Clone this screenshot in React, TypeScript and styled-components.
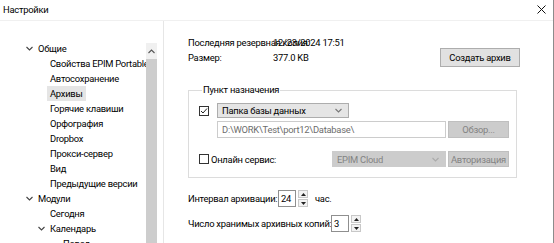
import React from 'react';
import styled, { createGlobalStyle, css } from 'styled-components';

const Global = createGlobalStyle`
  html, body { margin: 0; padding: 0; background: #fff; }
  body { font-family: Roboto, "Noto Sans", sans-serif; font-size: 9.4px; letter-spacing: -0.25px; color: #000; }
  * { box-sizing: border-box; }
`;

const Window = styled.div`
  width: 554px;
  height: 243px;
  overflow: hidden;
  display: flex;
  flex-direction: column;
  background: #fff;
  border-right: 1px solid #8c8c8c;
`;

const TitleBar = styled.div`
  height: 21px;
  flex: none;
  display: flex;
  align-items: center;
  justify-content: space-between;
  padding: 0 7px 1px 3px;
  border-bottom: 1px solid #f0f0f0;
`;

const Body = styled.div`
  flex: 1;
  min-height: 0;
  display: flex;
`;

const Sidebar = styled.div`
  width: 164px;
  flex: none;
  display: flex;
  border-right: 1px solid #e6e6e6;
`;

const Tree = styled.div`
  width: 146px;
  flex: none;
  overflow: hidden;
  padding-top: 20px;
`;

const Row = styled.div<{ $level: number }>`
  height: 15px;
  display: flex;
  align-items: stretch;
  padding-left: ${p => [23, 35, 48][p.$level]}px;
  white-space: nowrap;
`;

const ChevronBox = styled.span`
  width: 12px;
  flex: none;
  display: flex;
  align-items: center;
  justify-content: center;
`;

const Label = styled.span<{ $selected?: boolean }>`
  display: flex;
  align-items: center;
  padding: 0 3px;
  ${p => p.$selected && css`background: #e5e5e5;`}
`;

const Scrollbar = styled.div`
  width: 11px;
  flex: none;
  margin-top: 22px;
  display: flex;
  flex-direction: column;
  background: #f0f0f0;
`;

const ScrollArrow = styled.div`
  height: 16px;
  display: flex;
  align-items: center;
  justify-content: center;
`;

const ScrollThumb = styled.div`
  flex: 1;
  background: #cdcdcd;
`;

const Main = styled.div`
  flex: 1;
  min-width: 0;
  padding: 14px 33px 0 24px;
  display: flex;
  flex-direction: column;
`;

const Header = styled.div`
  display: flex;
  justify-content: space-between;
  align-items: flex-start;
`;

const InfoGrid = styled.div`
  display: grid;
  grid-template-columns: 85px auto;
  grid-auto-rows: 15px;
  align-items: center;
  white-space: nowrap;
`;

const Button = styled.button<{ $disabled?: boolean; $w: number; $h: number }>`
  width: ${p => p.$w}px;
  height: ${p => p.$h}px;
  flex: none;
  padding: 0;
  margin: 0;
  font: inherit;
  letter-spacing: inherit;
  color: #000;
  background: #e1e1e1;
  border: 1px solid #adadad;
  ${p => p.$disabled && css`
    background: #cccccc;
    border-color: #bfbfbf;
    color: #838383;
  `}
`;

const CreateButton = styled(Button)`
  margin-top: 13px;
`;

const Group = styled.fieldset`
  margin: 16px 3px 0 0;
  padding: 6px 7px 10px 10px;
  border: 1px solid #dcdcdc;
  display: flex;
  flex-direction: column;
  min-width: 0;
`;

const Legend = styled.legend`
  padding: 0 1px;
  margin-left: 3px;
  line-height: 14px;
`;

const GroupRow = styled.div<{ $mt?: number; $indent?: number }>`
  display: flex;
  align-items: center;
  margin-top: ${p => p.$mt ?? 0}px;
  padding-left: ${p => p.$indent ?? 0}px;
  gap: 2px;
`;

const CheckBox = styled.span`
  width: 10px;
  height: 10px;
  flex: none;
  border: 1px solid #333;
  background: #fff;
  display: flex;
  align-items: center;
  justify-content: center;
`;

const CheckLabel = styled.label`
  flex: 1;
  display: flex;
  align-items: center;
  gap: 2px;
  white-space: nowrap;
`;

const Combo = styled.div<{ $disabled?: boolean; $w: number; $h: number }>`
  width: ${p => p.$w}px;
  height: ${p => p.$h}px;
  flex: none;
  display: flex;
  align-items: center;
  justify-content: space-between;
  padding: 0 6px 0 4px;
  background: #e5e5e5;
  border: 1px solid #adadad;
  white-space: nowrap;
  ${p => p.$disabled && css`
    background: #cccccc;
    border-color: #cccccc;
    color: #838383;
  `}
`;

const PathInput = styled.div`
  width: 229px;
  height: 17px;
  flex: none;
  display: flex;
  align-items: center;
  padding: 0 4px;
  border: 1px solid #cccccc;
  color: #6d6d6d;
  white-space: nowrap;
  overflow: hidden;
`;

const SpinRow = styled.div<{ $mt: number; $labelW: number }>`
  display: grid;
  grid-template-columns: ${p => p.$labelW}px auto auto auto;
  justify-content: start;
  align-items: center;
  margin-top: ${p => p.$mt}px;
  white-space: nowrap;
`;

const SpinLabel = styled.span`
  overflow: visible;
`;

const SpinBox = styled.div`
  width: 18px;
  height: 17px;
  display: flex;
  align-items: center;
  padding-left: 2px;
  background: #fff;
  border: 1px solid #8f8f8f;
`;

const SpinArrows = styled.div`
  display: flex;
  flex-direction: column;
  gap: 1px;
  margin-left: 2px;
`;

const SpinArrow = styled.div`
  width: 10px;
  height: 8px;
  display: flex;
  align-items: center;
  justify-content: center;
  background: #f3f3f3;
  border: 1px solid #c8c8c8;
`;

const Unit = styled.span`
  margin-left: 7px;
`;

const Chevron = ({ color = '#444', up = false }: { color?: string; up?: boolean }) => (
  <svg width="7" height="5" viewBox="0 0 7 5">
    <polyline
      points={up ? '0.5,4 3.5,1 6.5,4' : '0.5,1 3.5,4 6.5,1'}
      fill="none"
      stroke={color}
      strokeWidth="1.1"
    />
  </svg>
);

const Tri = ({ up }: { up?: boolean }) => (
  <svg width="5" height="3" viewBox="0 0 5 3">
    <polygon points={up ? '0,3 2.5,0 5,3' : '0,0 5,0 2.5,3'} fill="#222" />
  </svg>
);

type Item = { label: string; level: number; open?: boolean; selected?: boolean };

const items: Item[] = [
  { label: 'Общие', level: 0, open: true },
  { label: 'Свойства EPIM Portable', level: 1 },
  { label: 'Автосохранение', level: 1 },
  { label: 'Архивы', level: 1, selected: true },
  { label: 'Горячие клавиши', level: 1 },
  { label: 'Орфография', level: 1 },
  { label: 'Dropbox', level: 1 },
  { label: 'Прокси-сервер', level: 1 },
  { label: 'Вид', level: 1 },
  { label: 'Предыдущие версии', level: 1 },
  { label: 'Модули', level: 0, open: true },
  { label: 'Сегодня', level: 1 },
  { label: 'Календарь', level: 1, open: true },
  { label: 'Повод', level: 2 },
];

export default function App() {
  return (
    <>
      <Global />
      <Window>
        <TitleBar>
          <span>Настройки</span>
          <svg width="9" height="9" viewBox="0 0 9 9">
            <path d="M0.5 0.5 L8.5 8.5 M8.5 0.5 L0.5 8.5" stroke="#111" strokeWidth="1" />
          </svg>
        </TitleBar>
        <Body>
          <Sidebar>
            <Tree>
              {items.map(it => (
                <Row key={it.label} $level={it.level}>
                  <ChevronBox>{it.open && <Chevron />}</ChevronBox>
                  <Label $selected={it.selected}>{it.label}</Label>
                </Row>
              ))}
            </Tree>
            <Scrollbar>
              <ScrollArrow>
                <Chevron up color="#555" />
              </ScrollArrow>
              <ScrollThumb />
            </Scrollbar>
          </Sidebar>
          <Main>
            <Header>
              <InfoGrid>
                <span>Последняя резервная копия:</span>
                <span>12/23/2024 17:51</span>
                <span>Размер:</span>
                <span>377.0 KB</span>
              </InfoGrid>
              <CreateButton $w={80} $h={19}>Создать архив</CreateButton>
            </Header>
            <Group>
              <Legend>Пункт назначения</Legend>
              <GroupRow>
                <CheckBox>
                  <svg width="8" height="8" viewBox="0 0 8 8">
                    <polyline points="1,4 3,6 7,1.5" fill="none" stroke="#222" strokeWidth="1" />
                  </svg>
                </CheckBox>
                <Combo $w={132} $h={15} style={{ marginLeft: 6 }}>
                  <span>Папка базы данных</span>
                  <Chevron color="#777" />
                </Combo>
              </GroupRow>
              <GroupRow $mt={3} $indent={18}>
                <PathInput>D:\WORK\Test\port12\Database\</PathInput>
                <Button $disabled $w={61} $h={17}>Обзор...</Button>
              </GroupRow>
              <GroupRow $mt={13}>
                <CheckLabel>
                  <CheckBox />
                  <span>Онлайн сервис:</span>
                </CheckLabel>
                <Combo $disabled $w={114} $h={16}>
                  <span>EPIM Cloud</span>
                  <Chevron color="#aaa" />
                </Combo>
                <Button $disabled $w={61} $h={16}>Авторизация</Button>
              </GroupRow>
            </Group>
            <SpinRow $mt={12} $labelW={90}>
              <SpinLabel>Интервал архивации:</SpinLabel>
              <SpinBox>24</SpinBox>
              <SpinArrows>
                <SpinArrow><Tri up /></SpinArrow>
                <SpinArrow><Tri /></SpinArrow>
              </SpinArrows>
              <Unit>час.</Unit>
            </SpinRow>
            <SpinRow $mt={8} $labelW={143}>
              <SpinLabel>Число хранимых архивных копий:</SpinLabel>
              <SpinBox>3</SpinBox>
              <SpinArrows>
                <SpinArrow><Tri up /></SpinArrow>
                <SpinArrow><Tri /></SpinArrow>
              </SpinArrows>
            </SpinRow>
          </Main>
        </Body>
      </Window>
    </>
  );
}
